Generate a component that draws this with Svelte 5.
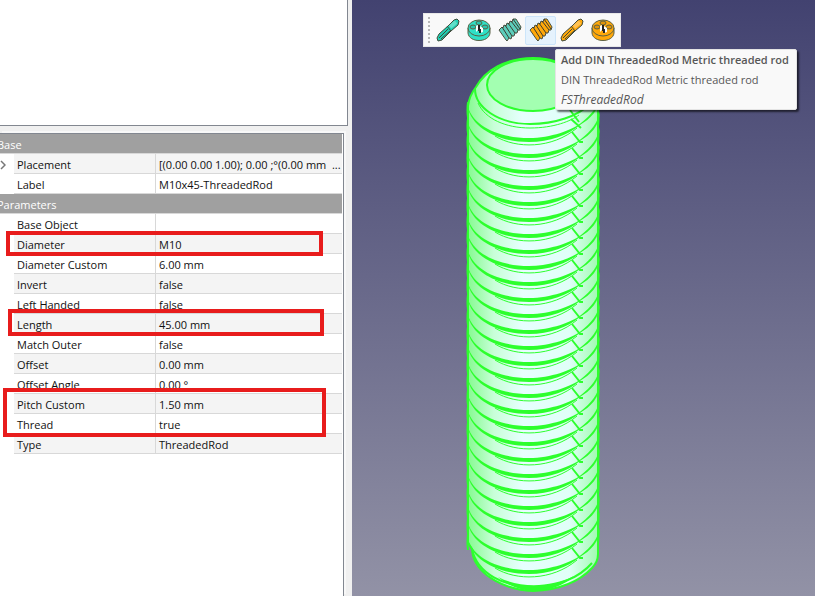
<script>
  const groups = [
    {
      name: 'Base',
      rows: [
        { name: 'Placement', value: '[(0.00 0.00 1.00); 0.00 ;°(0.00 mm  ...', expandable: true },
        { name: 'Label', value: 'M10x45-ThreadedRod' }
      ]
    },
    {
      name: 'Parameters',
      rows: [
        { name: 'Base Object', value: '' },
        { name: 'Diameter', value: 'M10' },
        { name: 'Diameter Custom', value: '6.00 mm' },
        { name: 'Invert', value: 'false' },
        { name: 'Left Handed', value: 'false' },
        { name: 'Length', value: '45.00 mm' },
        { name: 'Match Outer', value: 'false' },
        { name: 'Offset', value: '0.00 mm' },
        { name: 'Offset Angle', value: '0.00 °' },
        { name: 'Pitch Custom', value: '1.50 mm' },
        { name: 'Thread', value: 'true' },
        { name: 'Type', value: 'ThreadedRod' }
      ]
    }
  ];

  const tools = [
    { kind: 'tap', color: '#1fd0b4', label: 'Screw tap' },
    { kind: 'die', color: '#2fe0c6', label: 'Screw die' },
    { kind: 'rod', color: '#5ccdbb', label: 'Threaded rod' },
    { kind: 'rod', color: '#ffa80a', label: 'DIN threaded rod', active: true },
    { kind: 'tap', color: '#ffa80a', label: 'DIN screw tap' },
    { kind: 'die', color: '#ffa80a', label: 'DIN screw die' }
  ];

  // distance between two thread crests
  const pitch = 16;
  const threads = Array.from({ length: 28 }, (_, i) => 141 + i * pitch);
</script>

{#snippet icon(kind, color)}
  <svg class="icon" viewBox="0 0 24 24" aria-hidden="true">
    {#if kind === 'tap'}
      <path d="M1 20 3 16 12 8 18 2 21 1 23 3 22 7 15 13 6 22 2 23Z" fill={color} stroke="#3f4a3a" stroke-width="1" />
      <path d="M3 20 12 11M5 21 14 13M11 8 15 13" fill="none" stroke="#3f4a3a" stroke-width="1" />
      <path d="M14 9 20 4" stroke="#fff" stroke-opacity=".3" stroke-width="4" />
    {:else if kind === 'die'}
      <path d="M1 10V15C2 25 22 25 23 15V10Z" fill={color} stroke="#5b6146" />
      <ellipse cx="12" cy="10" rx="11" ry="8" fill={color} stroke="#5b6146" />
      <g fill="#000" fill-opacity=".12" stroke="#5b6146">
        <ellipse cx="12" cy="5" rx="3" ry="2" />
        <ellipse cx="6" cy="9" rx="3" ry="2" />
        <ellipse cx="18" cy="9" rx="3" ry="2" />
      </g>
      <path d="M9 8 11 7V12L9 14ZM13 8 16 10V14L13 15Z" fill="#fff" />
      <path d="M12 7V13M13 11V15" stroke="#222" stroke-width="2" />
    {:else}
      <path d="M1 12 4 9 5 10 6 7 8 8 9 5 11 6 12 3 14 4 15 1 18 1 23 9 22 12 20 12 19 15 17 15 16 18 14 18 13 21 11 20 9 23 8 22Z" fill={color} stroke="#4a5040" stroke-width="1" />
      <path d="M4 9 11 20M7 7 14 18M10 5 17 15M13 3 20 12M15 1 22 11" fill="none" stroke="#3a3c30" stroke-width="1" />
    {/if}
  </svg>
{/snippet}

<div class="window">
  <aside class="sidebar">
    <div class="tree"></div>

    <div class="properties">
      <table>
        <colgroup>
          <col class="col-gutter" />
          <col class="col-name" />
          <col />
        </colgroup>
        {#each groups as group}
          <tbody>
            <tr class="group">
              <th colspan="3">{group.name}</th>
            </tr>
            {#each group.rows as row, i}
              <tr class:alt={(i + (group.name === 'Base' ? 0 : 1)) % 2 === 0}>
                <td class="gutter">
                  {#if row.expandable}
                    <button class="expand" aria-label="Expand {row.name}">
                      <svg viewBox="0 0 6 10"><path d="M1 1 5 5 1 9" /></svg>
                    </button>
                  {/if}
                </td>
                <td class="name">{row.name}</td>
                <td class="value">{row.value}</td>
              </tr>
            {/each}
          </tbody>
        {/each}
      </table>

      <!-- highlighted properties -->
      <div class="mark mark-diameter"></div>
      <div class="mark mark-length"></div>
      <div class="mark mark-thread"></div>
    </div>
  </aside>

  <main class="scene">
    <svg class="model" viewBox="0 0 463 596" preserveAspectRatio="xMinYMin meet" role="img" aria-label="Threaded rod">
      <defs>
        <linearGradient id="body" x1="0" x2="1" y1="0" y2="0">
          <stop offset="0" stop-color="#86fa91" />
          <stop offset=".2" stop-color="#c8ffd8" />
          <stop offset=".42" stop-color="#e6fffe" />
          <stop offset=".78" stop-color="#e0fff8" />
          <stop offset="1" stop-color="#a0fbb0" />
        </linearGradient>
      </defs>
      <g transform="translate(-352 0)">
        <!-- silhouette -->
        <path
          d="M468 106C469 97 473 91 476 87C485 71 505 58 533 58C567 58 598 82 598 112V554C598 560 595 565 592 568C578 583 556 590 533 591C506 590 479 576 473 556L472 549L468 543Z"
          fill="url(#body)"
          class="outline"
        />

        <!-- thread crests -->
        {#each threads as y, i}
          <g transform="translate(0 {y})">
            <path class="crest" d="M467 -38C471 -15 499 -3 529 -3C551 -3 572 -11 581 -18C591 -26 598 -34 600 -46C600 -31 590 -22 580 -16C568 -6 550 1 529 1C497 1 469 -14 467 -38Z" />
            <path class="line" d="M495 -5C516 8 552 8 577 -13" />
            {#if i > 0}
              <path class="seam" d="M572 -25 580 -15H583" />
            {/if}
            <path class="edge" d="M468 -39Q467 -31 468 -23M598 -46Q599 -38 598 -30" />
          </g>
        {/each}

        <path class="outline" d="M472 549C477 574 505 587 533 587C557 587 579 578 592 563" />
        <path class="crest" d="M498 577C519 588 550 588 574 576C553 595 520 596 498 577Z" />

        <!-- chamfered end -->
        <path class="outline" d="M475 89C475 107 498 124 530 124C555 124 578 116 590 104" />
        <path class="line" d="M478 103C485 119 506 128 530 128C554 128 571 121 579 115" />
        <path class="seam" d="M570 110 579 122M571 119 581 128" />
        <ellipse cx="533" cy="85" rx="46" ry="26" fill="#a3ffb1" class="outline" />
      </g>
    </svg>

    <div class="toolbar" role="toolbar" aria-label="Fasteners">
      <span class="handle"></span>
      {#each tools as tool}
        <button class="tool" class:active={tool.active} aria-label={tool.label}>
          {@render icon(tool.kind, tool.color)}
        </button>
      {/each}

      <div class="tooltip" role="tooltip">
        <strong>Add DIN ThreadedRod Metric threaded rod</strong>
        <span>DIN ThreadedRod Metric threaded rod</span>
        <em>FSThreadedRod</em>
      </div>
    </div>
  </main>
</div>

<style>
  :global(body) {
    margin: 0;
    font-family: 'Open Sans', 'Noto Sans', sans-serif;
    font-size: 11px;
    color: #111;
  }

  .window {
    display: grid;
    grid-template-columns: minmax(0, 352fr) minmax(0, 463fr);
    min-height: 100vh;
    overflow: hidden;
  }

  .sidebar {
    display: flex;
    flex-direction: column;
    gap: 7px;
    background: #f0f0f0;
  }

  .tree {
    height: 125px;
    margin-right: 4px;
    background: #fff;
    border-right: 1px solid #828790;
    border-bottom: 1px solid #828790;
  }

  .properties {
    position: relative;
    flex: 1;
    margin-right: 8px;
    background: #fff;
    border-top: 1px solid #828790;
    border-right: 1px solid #828790;
    box-shadow: 2px -2px 0 #f8f8f8;
  }

  table {
    width: calc(100% - 1px);
    table-layout: fixed;
    border-collapse: separate;
    border-spacing: 0;
  }

  .col-gutter {
    width: 14px;
  }

  .col-name {
    width: 142px;
  }

  th,
  td {
    box-sizing: border-box;
    height: 20px;
    padding: 2px 0 0;
    line-height: 17px;
    white-space: pre;
    overflow: hidden;
    text-align: left;
    border-bottom: 1px solid #d8d8d8;
  }

  .group th {
    background: #a0a0a0;
    color: #fff;
    font-weight: 400;
    text-indent: -3px;
  }

  .gutter {
    background: #fff;
    border-bottom-color: #fff;
  }

  .name {
    padding-left: 3px;
    border-right: 1px solid #d8d8d8;
  }

  .value {
    padding-left: 3px;
  }

  .alt .name,
  .alt .value {
    background: #f4f4f4;
  }

  .expand {
    display: block;
    padding: 0;
    border: 0;
    background: none;
  }

  .expand svg {
    display: block;
    width: 6px;
    height: 10px;
    fill: none;
    stroke: #777;
    stroke-width: 1.5;
  }

  .mark {
    position: absolute;
    box-sizing: border-box;
    border: 4px solid #e81c1c;
    pointer-events: none;
  }

  .mark-diameter {
    left: 6px;
    right: 20px;
    top: 97px;
    height: 25px;
  }

  .mark-length {
    left: 8px;
    right: 19px;
    top: 175px;
    height: 27px;
  }

  .mark-thread {
    left: 3px;
    right: 17px;
    top: 254px;
    height: 49px;
  }

  .scene {
    position: relative;
    padding: 13px 0 0 71px;
    background: linear-gradient(#424270, #9292a6);
  }

  .model {
    position: absolute;
    inset: 0;
    width: 100%;
    height: 100%;
  }

  .outline,
  .line,
  .seam,
  .edge {
    stroke: #2dff2d;
    stroke-width: 2;
  }

  .line,
  .seam,
  .edge {
    fill: none;
  }

  path.outline:not([fill]) {
    fill: none;
  }

  .line {
    stroke-width: 1;
  }

  .crest {
    fill: #2dff2d;
  }

  .toolbar {
    position: relative;
    display: flex;
    align-items: center;
    box-sizing: border-box;
    width: max-content;
    height: 34px;
    padding: 0 2px 0 4px;
    background: #f9f9f9;
    border: 1px solid #e8e8e8;
  }

  .handle {
    width: 2px;
    height: 26px;
    margin-right: 2px;
    background: repeating-linear-gradient(#b8b8b8 0 2px, transparent 2px 4px);
  }

  .tool {
    display: grid;
    place-items: center;
    box-sizing: border-box;
    width: 31px;
    height: 29px;
    padding: 0;
    border: 1px solid transparent;
    border-radius: 2px;
    background: none;
  }

  .tool.active {
    background: #e5f2fd;
    border-color: #cce5fa;
  }

  .icon {
    width: 24px;
    height: 24px;
  }

  .tooltip {
    position: absolute;
    top: 35px;
    left: 131px;
    display: flex;
    flex-direction: column;
    box-sizing: border-box;
    width: 242px;
    height: 61px;
    padding: 0 5px;
    line-height: 20px;
    white-space: nowrap;
    color: #575757;
    background: #f9f9f9;
    border: 1px solid #e4e4e4;
    border-radius: 2px;
    box-shadow: 2px 2px 2px rgba(0, 0, 0, 0.6);
  }

  .tooltip strong {
    font-weight: 600;
  }

  .tooltip em {
    font-size: 12px;
  }
</style>
